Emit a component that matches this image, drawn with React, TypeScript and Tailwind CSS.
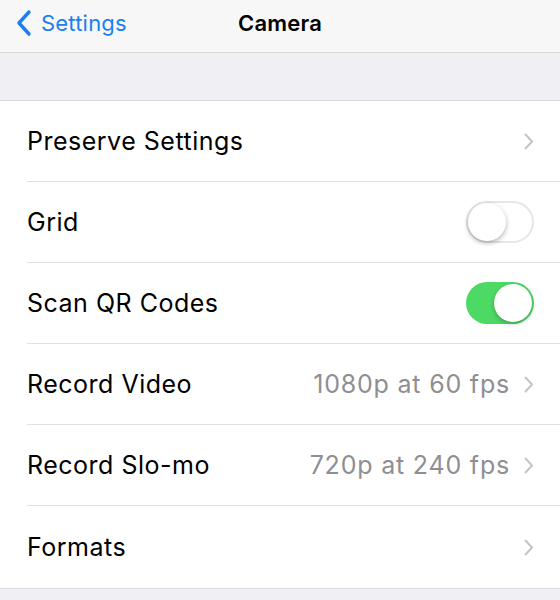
import React from 'react';

function Chevron() {
  return (
    <svg width="10" height="17" viewBox="0 0 10 17" className="ml-[14px] shrink-0">
      <path d="M1.5 1.5 L8 8.5 L1.5 15.5" fill="none" stroke="#c4c4c7" strokeWidth="2" strokeLinecap="round" strokeLinejoin="round" />
    </svg>
  );
}

function Toggle({ on }: { on: boolean }) {
  return on ? (
    <div className="w-[68px] h-[42px] rounded-full bg-[#4cd964] flex items-center justify-end p-[2px]">
      <div className="w-[38px] h-[38px] rounded-full bg-white shadow-[0_2px_4px_rgba(0,0,0,0.25)]" />
    </div>
  ) : (
    <div className="w-[68px] h-[42px] rounded-full bg-white border-2 border-[#e5e5ea] flex items-center justify-start">
      <div className="w-[38px] h-[38px] rounded-full bg-white shadow-[0_2px_5px_rgba(0,0,0,0.3)]" />
    </div>
  );
}

type Row = { label: string; value?: string; kind: 'link' | 'off' | 'on' };

const rows: Row[] = [
  { label: 'Preserve Settings', kind: 'link' },
  { label: 'Grid', kind: 'off' },
  { label: 'Scan QR Codes', kind: 'on' },
  { label: 'Record Video', value: '1080p at 60 fps', kind: 'link' },
  { label: 'Record Slo-mo', value: '720p at 240 fps', kind: 'link' },
  { label: 'Formats', kind: 'link' },
];

export default function App() {
  return (
    <div className="w-[560px] h-[600px] bg-[#efeff4] overflow-hidden font-['Inter','Liberation_Sans',sans-serif]">
      {/* Nav bar */}
      <div className="h-[53px] bg-[#f7f7f7] border-b border-[#d8d8dc] relative flex items-center pb-[6px]">
        <div className="flex items-center pl-[15px] text-[#1a7ff0]">
          <svg width="18" height="28" viewBox="0 0 18 28">
            <path d="M14 3 L4 14 L14 25" fill="none" stroke="#1a7ff0" strokeWidth="3.4" strokeLinecap="round" strokeLinejoin="round" />
          </svg>
          <span className="ml-[8px] text-[22px] tracking-[0.2px]">Settings</span>
        </div>
        <div className="absolute left-0 right-0 text-center text-[22px] font-semibold text-black tracking-[0.2px] pointer-events-none">
          Camera
        </div>
      </div>

      {/* Gap */}
      <div className="h-[48px] border-b border-[#d8d8dc]" />

      {/* List */}
      <div className="bg-white border-b border-[#d8d8dc]">
        {rows.map((r, i) => (
          <div key={r.label} className="pl-[27px]">
            <div
              className={`flex items-center pr-[26px] ${i < rows.length - 1 ? 'h-[81px] border-b border-[#e0e0e4]' : 'h-[82px]'}`}
            >
              <span className="text-[25px] text-black tracking-[0.5px] flex-1 pt-[2px]">{r.label}</span>
              {r.value && <span className="text-[25px] text-[#8e8e93] tracking-[0.8px] pt-[2px]">{r.value}</span>}
              {r.kind === 'link' && <Chevron />}
              {r.kind === 'off' && <Toggle on={false} />}
              {r.kind === 'on' && <Toggle on />}
            </div>
          </div>
        ))}
      </div>
    </div>
  );
}
